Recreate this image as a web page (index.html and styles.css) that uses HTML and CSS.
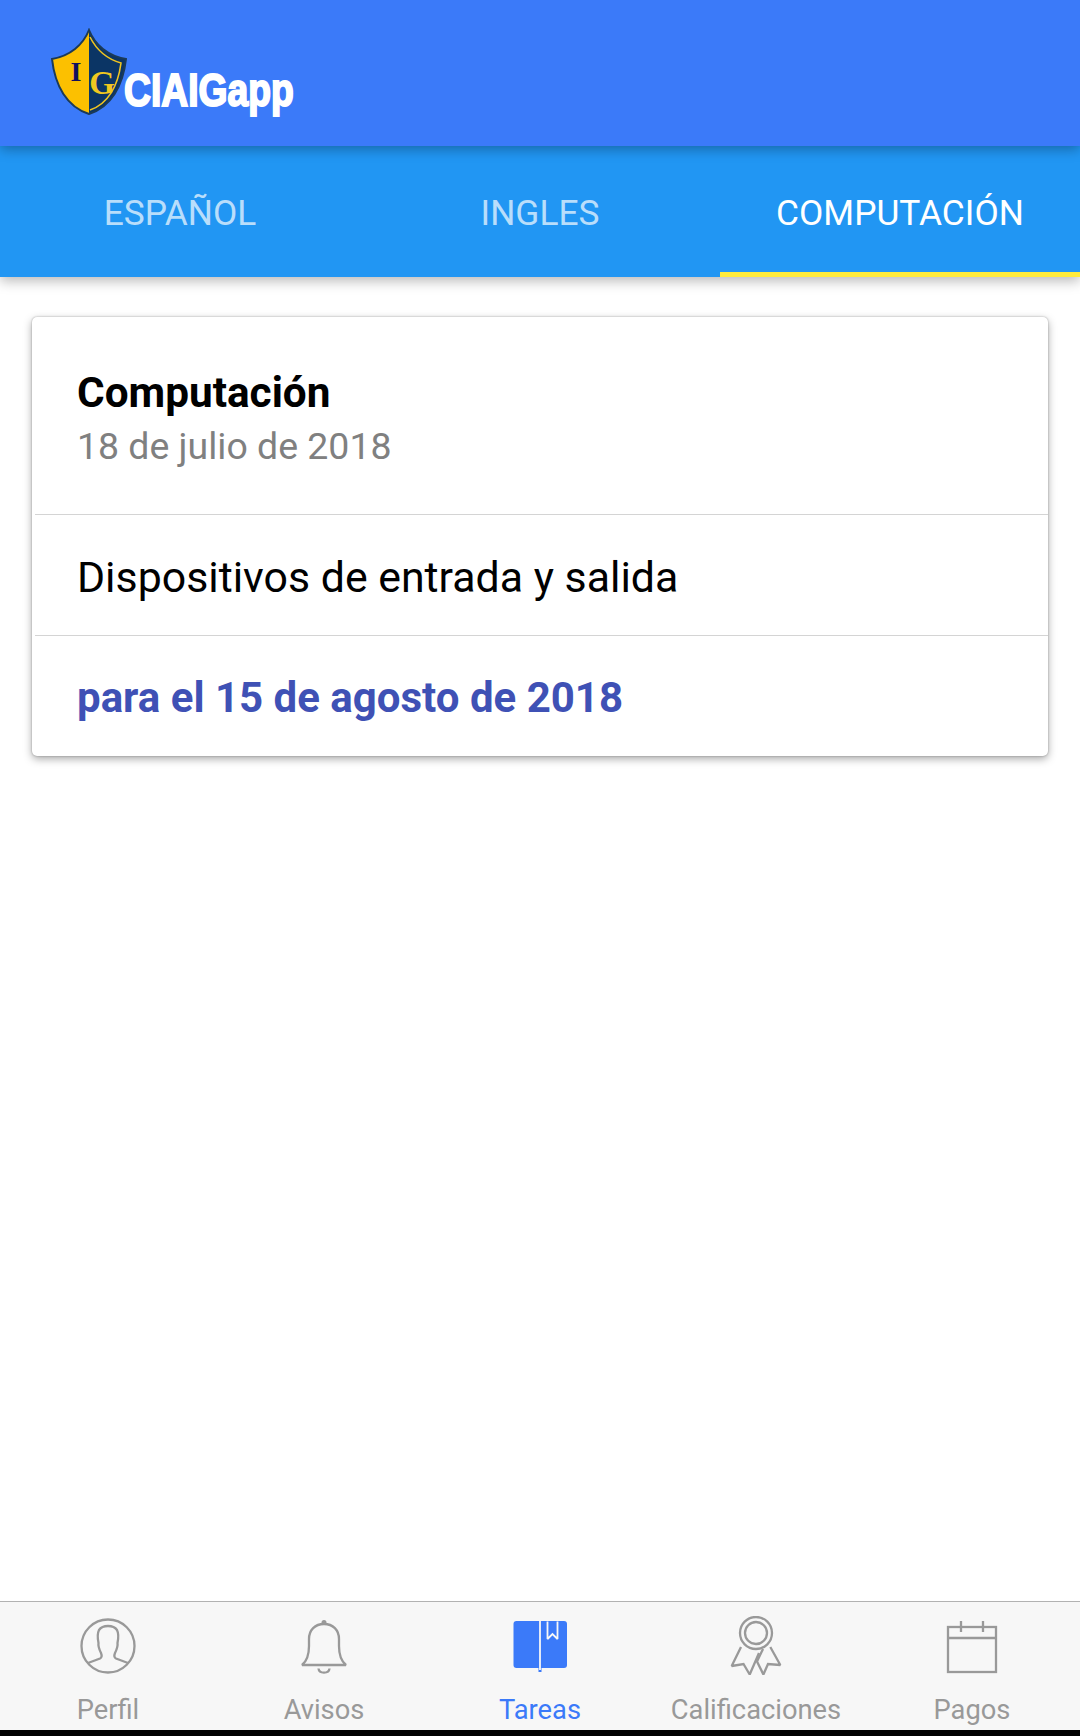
FILE: index.html
```html
<!DOCTYPE html>
<html lang="es" dir="ltr">
  <head>
    <meta charset="utf-8">
    <title>CIAIGapp</title>
    <link rel="stylesheet" href="styles.css">
  </head>
  <body>
    <div class="app">
      <header class="topbar">
        <svg class="shield" viewBox="0 0 78 88" width="78" height="88">
          <path d="M39 2C33 17 20 28 2 31C5 58 17 79 39 86Z" fill="#fcc000"/>
          <path d="M39 2C45 17 58 28 76 31C73 58 61 79 39 86Z" fill="#0b3565"/>
          <path d="M40 9C46 21 57 31 71 35C68 58 58 76 40 82" fill="none" stroke="#f0c420" stroke-width="1.6"/>
          <path d="M39 2C33 17 20 28 2 31C5 58 17 79 39 86C61 79 73 58 76 31C58 28 45 17 39 2Z" fill="none" stroke="#1b3a58" stroke-width="2"/>
          <text class="shield-i" x="26" y="53" text-anchor="middle">I</text>
          <text class="shield-g" x="52" y="66" text-anchor="middle">G</text>
        </svg>
        <span class="brand">CIAIGapp</span>
      </header>

      <nav class="tabs">
        <a class="tab">ESPAÑOL</a>
        <a class="tab">INGLES</a>
        <a class="tab active">COMPUTACIÓN</a>
      </nav>

      <main class="content">
        <section class="card">
          <div class="card-head">
            <h2 class="subject">Computación</h2>
            <p class="date">18 de julio de 2018</p>
          </div>
          <div class="card-row">Dispositivos de entrada y salida</div>
          <div class="card-row due">para el 15 de agosto de 2018</div>
        </section>
      </main>

      <footer class="bottombar">
        <a class="bottom-item">
          <svg class="icon" viewBox="0 0 60 60" width="60" height="60">
            <circle cx="30" cy="30" r="26.5"/>
            <path d="M10 47L22 42.5C24 41.5 24 39.5 23 37C21 33 20 30 20.5 27C19.5 22 19 18 21 14C23 11 26 10 30 10C34 10 37 11 39 14C41 18 40.5 22 39.500 27C40 30 39 33 37 37C36 39.500 36 41.500 38 42.500L50 47"/>
          </svg>
          <span>Perfil</span>
        </a>
        <a class="bottom-item">
          <svg class="icon" viewBox="0 0 60 60" width="60" height="60">
            <path d="M8 49C13 45 15 40 15 30V23C15 14 21 8 30 8C39 8 45 14 45 23V30C45 40 47 45 52 49Z"/>
            <circle class="solid" cx="30" cy="6.500" r="2.500"/>
            <path d="M24.500 52.500C25 58 35 58 35.500 52.500"/>
          </svg>
          <span>Avisos</span>
        </a>
        <a class="bottom-item on">
          <svg class="icon" viewBox="0 0 60 60" width="60" height="60">
            <rect class="solid" x="3.500" y="5" width="53.500" height="47" rx="3"/>
            <rect class="solid" x="28.500" y="50" width="3" height="6"/>
            <path class="cut" d="M30 5V54M37.500 5.500V23L42.500 18L47.500 23V5.500"/>
          </svg>
          <span>Tareas</span>
        </a>
        <a class="bottom-item">
          <svg class="icon" viewBox="0 0 60 60" width="60" height="60">
            <circle cx="30" cy="17" r="16"/>
            <circle cx="30" cy="17" r="11"/>
            <path d="M15 31L5.700 50L17.500 48L23.700 58.500L33 37"/>
            <path d="M44.300 31L54.300 49L42 48L37.400 58.500L31 45.500L37 33"/>
          </svg>
          <span>Calificaciones</span>
        </a>
        <a class="bottom-item">
          <svg class="icon" viewBox="0 0 60 60" width="60" height="60">
            <rect x="6" y="11" width="48" height="45"/>
            <path d="M6 22H54M19 5V16M41 5V16"/>
          </svg>
          <span>Pagos</span>
        </a>
      </footer>
      <div class="navstrip"></div>
    </div>
  </body>
</html>
```

FILE: styles.css
```css
* {
  margin: 0;
  padding: 0;
  box-sizing: border-box;
}
body {
  font-family: Roboto, "Liberation Sans", sans-serif;
  background: #fff;
}
.app {
  width: 1080px;
  height: 1736px;
  display: flex;
  flex-direction: column;
  overflow: hidden;
}

.topbar {
  height: 146px;
  padding: 28px 0 0 50px;
  background: #3b7af9;
  display: flex;
  align-items: flex-start;
  position: relative;
  z-index: 2;
  box-shadow: 0 3px 12px rgba(0, 0, 0, 0.32);
}
.shield {
  flex: none;
}
.shield-i {
  font: bold 28px "Liberation Serif", serif;
  fill: #12105e;
}
.shield-g {
  font: bold 33px "Liberation Serif", serif;
  fill: #f0c820;
}
.brand {
  margin: 34px 0 0 -4px;
  font: bold 46px/56px "Liberation Sans", sans-serif;
  color: #fff;
  -webkit-text-stroke: 2px #fff;
  transform: scaleX(0.81);
  transform-origin: left center;
}

.tabs {
  height: 131px;
  background: #2196f3;
  display: flex;
  position: relative;
  z-index: 1;
  box-shadow: 0 4px 12px rgba(0, 0, 0, 0.28);
}
.tab {
  flex: 1;
  display: flex;
  align-items: center;
  justify-content: center;
  padding-top: 8px;
  border-bottom: 5px solid transparent;
  font-size: 35.3px;
  color: rgba(255, 255, 255, 0.7);
}
.tab.active {
  color: #fff;
  border-bottom-color: #ffeb3b;
}

.content {
  flex: 1;
  padding: 40px 32px 0;
}
.card {
  background: #fff;
  border-radius: 5px;
  box-shadow: 0 3px 9px rgba(0, 0, 0, 0.34), 0 0 2px rgba(0, 0, 0, 0.32);
}
.card-head {
  height: 197px;
  padding: 51px 45px 0;
}
.subject {
  font-size: 42.3px;
  line-height: 50px;
  font-weight: 700;
  color: #000;
}
.date {
  margin-top: 6px;
  font-size: 37.45px;
  line-height: 44px;
  color: #808080;
}
.card-row {
  height: 121px;
  margin-left: 3px;
  padding: 4px 0 0 42px;
  display: flex;
  align-items: center;
  border-top: 1px solid #d4d4d4;
  font-size: 42.85px;
  color: #000;
}
.due {
  padding-top: 2px;
  font-size: 42px;
  font-weight: 700;
  color: #3f51b5;
}

.bottombar {
  height: 129px;
  background: #f7f7f7;
  border-top: 1px solid #b2b2b2;
  display: flex;
}
.bottom-item {
  flex: 1;
  display: flex;
  flex-direction: column;
  align-items: center;
  padding-top: 14px;
  font-size: 27.3px;
  line-height: 32px;
  color: #999;
}
.bottom-item span {
  margin-top: 18px;
}
.bottom-item.on {
  color: #3b7af9;
}
.icon {
  fill: none;
  stroke: currentColor;
  stroke-width: 2.3;
  stroke-miterlimit: 2;
}
.icon .solid {
  fill: currentColor;
  stroke: none;
}
.icon .cut {
  stroke: #f7f7f7;
  stroke-width: 1.8;
}
.navstrip {
  height: 6px;
  background: #000;
}
```
